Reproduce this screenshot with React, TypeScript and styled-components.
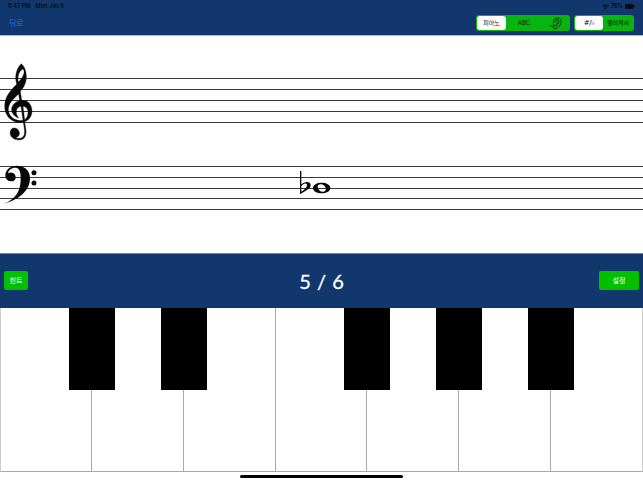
import * as React from "react";
import styled, { createGlobalStyle } from "styled-components";

const GlobalStyle = createGlobalStyle`
  * {
    box-sizing: border-box;
  }

  body {
    margin: 0;
    background: #fff;
    font-family: "Inter", "Noto Sans CJK KR", sans-serif;
  }
`;

const Screen = styled.main`
  width: 643px;
  height: 482px;
  display: flex;
  flex-direction: column;
  overflow: hidden;
  background: #fff;
`;

const Header = styled.header`
  height: 36px;
  flex: none;
  background: #11376d;
  border-bottom: 1px solid #a9bcd6;
`;

const StatusBar = styled.div`
  height: 12px;
  padding: 0 8px;
  display: flex;
  align-items: center;
  justify-content: space-between;
  color: #040d1d;
  font-size: 5.6px;
  font-weight: 600;
  line-height: 12px;
`;

const StatusGroup = styled.div<{ $gap: number }>`
  display: flex;
  align-items: center;
  gap: ${(props) => props.$gap}px;
`;

const NavBar = styled.nav`
  height: 22px;
  padding: 0 9px;
  display: flex;
  align-items: center;
  justify-content: space-between;
`;

const BackButton = styled.button`
  padding: 0;
  border: 0;
  background: none;
  color: #0a74f0;
  font: 8px/12px "Noto Sans CJK KR", sans-serif;
`;

const Segments = styled.div`
  display: flex;
  gap: 4px;
`;

const SegmentedControl = styled.div<{ $columns: string }>`
  height: 16px;
  padding: 1px;
  display: grid;
  grid-template-columns: ${(props) => props.$columns};
  border-radius: 3px;
  background: #08b40f;
`;

const Segment = styled.button<{ $active?: boolean }>`
  padding: 0;
  border: 0;
  border-radius: 3px;
  display: flex;
  align-items: center;
  justify-content: center;
  background: ${(props) => (props.$active ? "#fff" : "transparent")};
  color: #08150a;
  font: 400 6px/14px "Inter", "Noto Sans CJK KR", sans-serif;
  white-space: nowrap;
`;

const Accidentals = styled.span`
  font-family: "DejaVu Sans", sans-serif;
  font-size: 7px;
  letter-spacing: -0.4px;
`;

const Score = styled.svg`
  display: block;
  width: 643px;
  height: 217px;
  flex: none;
`;

const Controls = styled.section`
  height: 55px;
  flex: none;
  padding: 0 4px 1px;
  display: grid;
  grid-template-columns: 1fr auto 1fr;
  align-items: center;
  border-top: 1px solid #71849f;
  background: #11376d;
`;

const ActionButton = styled.button<{ $width: number; $end?: boolean }>`
  width: ${(props) => props.$width}px;
  height: 19px;
  padding: 0;
  justify-self: ${(props) => (props.$end ? "end" : "start")};
  border: 0;
  border-radius: 2px;
  background: #00c000;
  color: #fff;
  font: 7px/19px "Noto Sans CJK KR", sans-serif;
`;

const Counter = styled.div`
  color: #fff;
  font: 400 20px/24px "Lato", sans-serif;
  word-spacing: 1px;
  -webkit-text-stroke: 0.3px #fff;
`;

const Piano = styled.section`
  height: 164px;
  flex: none;
  display: grid;
  grid-template-columns: repeat(7, 1fr);
  background: #fff;
`;

const WhiteKey = styled.div`
  position: relative;
  border: solid #aaa;
  border-width: 0 1px 1px 0;

  &:first-child {
    border-left: 1px solid #ccc;
  }

  &:last-child {
    border-right-color: #ccc;
  }
`;

const BlackKey = styled.div`
  position: absolute;
  z-index: 1;
  top: 0;
  right: -24px;
  width: 46px;
  height: 82px;
  background: #000;
`;

const HomeArea = styled.footer`
  height: 10px;
  display: flex;
  justify-content: center;
  padding-top: 3px;
`;

const HomeIndicator = styled.div`
  width: 163px;
  height: 3px;
  border-radius: 2px;
  background: #000;
`;

const trebleLines = [78.5, 89.5, 100.5, 111.5, 122.5];
const bassLines = [166.5, 177.5, 188.5, 198.5, 209.5];

// sharp marks a black key on the right
const keys = [
  { note: "C", sharp: true },
  { note: "D", sharp: true },
  { note: "E", sharp: false },
  { note: "F", sharp: true },
  { note: "G", sharp: true },
  { note: "A", sharp: true },
  { note: "B", sharp: false }
];

const WifiIcon = () => (
  <svg width="7" height="5" viewBox="0 0 14 10" fill="none" stroke="#040d1d" strokeWidth="2">
    <path d="M1 4 Q7 -1.5 13 4 M3.5 6.5 Q7 3.5 10.5 6.5" />
    <circle cx="7" cy="8.6" r="0.8" />
  </svg>
);

const BatteryIcon = () => (
  <svg width="10" height="5" viewBox="0 0 10 5" fill="#040d1d">
    <rect width="8.6" height="5" rx="1.2" />
    <rect x="9" y="1.6" width="0.8" height="1.8" rx="0.4" />
  </svg>
);

const EarIcon = () => (
  <svg
    width="14"
    height="13"
    viewBox="0 0 28 26"
    fill="none"
    stroke="#07300a"
    strokeWidth="1.9"
    strokeLinecap="round"
    strokeLinejoin="round"
  >
    <path d="M9 11 C8 5 12 1.5 17 2 C23 2 26 8 24 13 C22 18 18 19 16 22 C14 25 10 24 9 21" />
    <path d="M13 10 C12 7 14 5 17 5.5 C21 6 20 11 18 14 M16 9 C18 10 17 13 15 14 C17 16 15 18 13 18" />
    <path d="M2 17.5 H11 M8 14.5 L11.5 17.5 L8 20.5" />
  </svg>
);

const GrandStaff = () => (
  <Score viewBox="0 36 643 217">
    {[...trebleLines, ...bassLines].map((y) => (
      <line key={y} x1="0" x2="643" y1={y} y2={y} stroke="#3a3a3a" strokeWidth="1" />
    ))}
    {/* treble clef */}
    <g
      transform="translate(0 55) scale(0.3333)"
      fill="#080808"
      fillRule="evenodd"
      stroke="#080808"
      strokeWidth="1"
    >
      <path
        d="M64 26 C54 34 47 52 47 68 C47 76 49 82 50 88 C34 104 14 124 14 154
          C14 182 34 203 60 203 C64 203 67 202 70 201 L73 222 C76 240 70 250 57 250
          C52 250 50 249 48 248 C56 245 60 239 58 232 C56 222 48 218 41 219
          C33 220 29 229 31 238 C34 250 45 255 57 255 C73 255 80 243 78 225
          L74 200 C88 195 96 183 96 168 C96 150 84 136 68 136 L65 136 L61 109
          C72 97 80 82 79 62 C78 44 72 32 64 26 Z
          M69 42 C74 47 73 55 69 62 C66 70 60 76 55 81 C52 66 56 48 69 42 Z
          M56 117 L59 137 C45 140 34 152 35 165 C36 177 45 185 56 189
          C51 182 48 176 49 168 C50 160 56 155 63 154 L69 196
          C50 200 27 188 25 166 C24 147 40 131 56 117 Z
          M69 154 C78 155 84 161 84 172 C84 183 80 190 74 194 Z"
      />
    </g>
    {/* bass clef */}
    <g transform="translate(0 155) scale(0.3333)" fill="#080808">
      <path
        d="M12 147 C46 132 61 110 62 76 C63 50 58 38 46 38 C34 38 26 45 24 55
          C30 50 45 51 47 65 C48 75 40 80 32 79 C21 78 16 70 16 60
          C17 43 32 32 50 32 C74 32 90 46 90 70 C90 108 56 134 12 147 Z"
      />
      <circle cx="102" cy="53" r="7.5" />
      <circle cx="102" cy="84" r="7.5" />
    </g>
    {/* flat and whole note */}
    <g transform="translate(290 160) scale(0.3333)" fill="#080808" fillRule="evenodd">
      <path
        d="M30 33 H34 V73 C42 64 62 62 62 75 C62 87 46 92 30 103 Z
          M34 79 V95 C43 89 51 83 51 75 C51 68 40 69 34 79 Z"
      />
      <path
        d="M69 84 C69 74 81 68 95 68 C109 68 121 74 121 84 C121 94 109 100 95 100
          C81 100 69 94 69 84 Z
          M83 80 C84 90 92 96 100 95 C107 94 109 88 107 83 C104 76 98 72 91 73
          C86 73 83 76 83 80 Z"
      />
    </g>
  </Score>
);

const App: React.FC = () => {
  return (
    <Screen>
      <GlobalStyle />
      <Header>
        <StatusBar>
          <StatusGroup $gap={5}>
            <span>8:47 PM</span>
            <span>Mon Jan 6</span>
          </StatusGroup>
          <StatusGroup $gap={2}>
            <WifiIcon />
            <span>76%</span>
            <BatteryIcon />
          </StatusGroup>
        </StatusBar>
        <NavBar>
          <BackButton>뒤로</BackButton>
          <Segments>
            <SegmentedControl $columns="29px 36px 27px">
              <Segment $active>피아노</Segment>
              <Segment>ABC</Segment>
              <Segment aria-label="ear">
                <EarIcon />
              </Segment>
            </SegmentedControl>
            <SegmentedControl $columns="28px 30px">
              <Segment $active>
                <Accidentals>#/♭</Accidentals>
              </Segment>
              <Segment>떨어져서</Segment>
            </SegmentedControl>
          </Segments>
        </NavBar>
      </Header>
      <GrandStaff />
      <Controls>
        <ActionButton $width={24}>힌트</ActionButton>
        <Counter>5 / 6</Counter>
        <ActionButton $width={40} $end>
          설정
        </ActionButton>
      </Controls>
      <Piano>
        {keys.map((key) => (
          <WhiteKey key={key.note}>{key.sharp && <BlackKey />}</WhiteKey>
        ))}
      </Piano>
      <HomeArea>
        <HomeIndicator />
      </HomeArea>
    </Screen>
  );
};

export default App;
